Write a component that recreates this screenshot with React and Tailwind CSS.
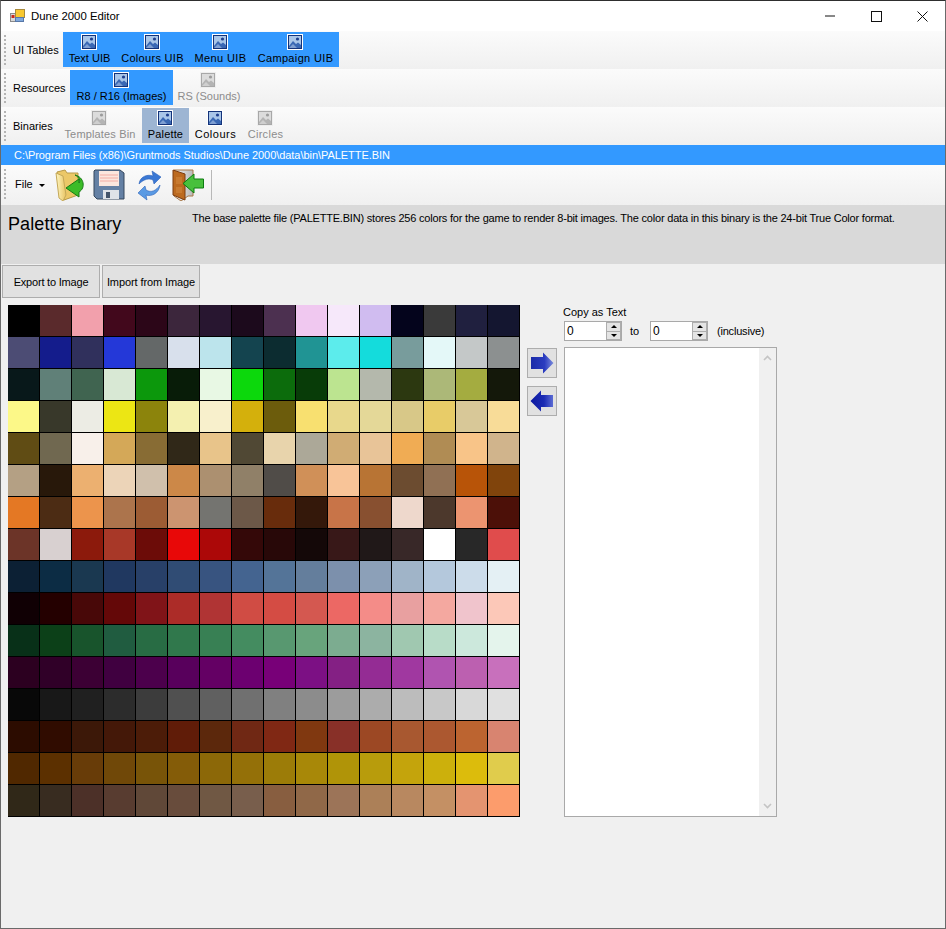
import React from "react";

const palette = [
  ["#000000","#5a2a2c","#f2a0ac","#42081c","#2c0618","#3c263c","#281630","#1c0a1c","#4c3050","#f0c8f0","#f6e8fa","#d0bcf0","#04041c","#3a3a3a","#20203f","#141630"],
  ["#4c4c74","#141c8c","#30305c","#2438d8","#646868","#d8e0ec","#bce4ec","#14444f","#0c2c30","#209494","#5cecec","#14dcdc","#789c9c","#e4f8f8","#c4c8c8","#8c9090"],
  ["#08181a","#608078","#406450","#d8e8d4","#0c980c","#081c08","#e8f8e4","#0cd80c","#0c6c0c","#083c08","#bce490","#b4b8ac","#2c3810","#acb878","#a4ac40","#14180a"],
  ["#fcf888","#38382a","#ecece4","#ece614","#8c840c","#f4f0b0","#f8f0cc","#d4b00c","#6c5c0c","#f8e070","#e8d88c","#e4d898","#d8c888","#e8cc68","#d8c898","#f8dc98"],
  ["#604c14","#706850","#f8f0ea","#d4a858","#886c34","#302818","#e8c48a","#504834","#e8d4ac","#aca898","#d0ac74","#e8c498","#f0ac54","#b08c54","#f8c488","#d0b48c"],
  ["#b4a084","#28180a","#ecb070","#ecd4b8","#d0c0ac","#cc8848","#ac9070","#908068","#504c48","#d09058","#f8c498","#b87434","#6c4c30","#907054","#b85408","#80440c"],
  ["#e47824","#4c2c14","#ec944c","#ac744c","#9c5c34","#cc9470","#747470","#6c5848","#682c0c","#34180a","#c87448","#885030","#eed8cc","#4c382c","#ec9470","#4c1008"],
  ["#6c3428","#d8d0d0","#8c1a0c","#a83828","#6c0c08","#e80808","#ac0808","#340808","#280808","#140808","#381818","#201818","#382828","#ffffff","#282828","#e04c4c"],
  ["#0c2034","#0c2c44","#1a3850","#203860","#284068","#304c74","#385480","#446490","#547498","#647e9c","#7c90ac","#8ca0b8","#a0b4c8","#b4c8dc","#ccdcea","#e4f0f4"],
  ["#100004","#240000","#480808","#640808","#801418","#ac2c28","#b03434","#d04c44","#d44c44","#d45850","#ec6864","#f48c88","#e8a0a0","#f4a8a0","#f0c4cc","#fcc8b8"],
  ["#083018","#0c4018","#18542c","#205c40","#286c44","#30784c","#388054","#448c60","#589870","#68a47c","#7cac90","#8cb4a0","#a0c8b0","#b8dcc8","#cce8dc","#e4f4ec"],
  ["#2c0020","#300028","#3c0034","#400040","#4c004c","#58005c","#640064","#6c0070","#780078","#7c1084","#842084","#942c94","#a038a0","#b054b0","#bc60b0","#c870bc"],
  ["#080808","#181818","#202020","#2c2c2c","#3c3c3c","#505050","#606060","#707070","#808080","#8c8c8c","#9c9c9c","#acacac","#bcbcbc","#c8c8c8","#d8d8d8","#e0e0e0"],
  ["#2c0c00","#300c00","#3c1808","#441808","#4c1c08","#601c08","#5c280c","#702814","#802814","#803810","#883028","#9c4824","#a85830","#ac5830","#bc6430","#d88470"],
  ["#502800","#5c3000","#683c08","#704808","#785408","#845c08","#8c6808","#947008","#9c7c08","#a88808","#b09408","#b89c0c","#c4a40c","#ccb00c","#dcbc0c","#e0cc4c"],
  ["#302818","#382c20","#4c3028","#583c30","#604838","#684c3c","#705844","#785e4c","#885e40","#906848","#9c7458","#ac8058","#b88860","#c49064","#e49470","#fc9c6c"],
];

function AppIcon() {
  return (
    <svg width="16" height="16" viewBox="0 0 16 16" className="shrink-0">
      <rect x="0.5" y="5.5" width="5" height="8" fill="#d8d8d8" stroke="#8a8a8a" />
      <rect x="1.5" y="7" width="3" height="3" fill="#c8281c" />
      <rect x="5.5" y="1.5" width="9" height="8" fill="#f8c830" stroke="#a88a3c" />
      <rect x="5.5" y="9.5" width="8" height="4" fill="#7fa8dc" stroke="#5878a8" />
    </svg>
  );
}

function ImageIcon({ off }) {
  const frame = off ? "#a8a8a8" : "#14337a";
  const sky = off ? "#dcdcdc" : "#a9c6e8";
  const hill = off ? "#b4b4b4" : "#3a68b4";
  const hill2 = off ? "#cfcfcf" : "#7f9fd2";
  return (
    <svg width="16" height="16" viewBox="0 0 16 16" className="block -translate-x-[1px]">
      <rect x="0" y="0" width="16" height="16" fill={off ? "#eeeeee" : "#ffffff"} />
      <rect x="1" y="1" width="14" height="14" fill={frame} />
      <rect x="2" y="2" width="12" height="12" fill={sky} />
      <circle cx="10.5" cy="5" r="1.6" fill={off ? "#9c9c9c" : "#1e3f8e"} />
      <path d="M2 12 L6 7 L9 10 L11 8.5 L14 11 V14 H2 Z" fill={hill} />
      <path d="M2 14 L6 10 L10 14 Z" fill={hill2} />
    </svg>
  );
}

function FolderIcon() {
  return (
    <svg width="32" height="32" viewBox="0 0 32 32" className="block">
      <defs>
        <linearGradient id="folderFront" x1="0" y1="0" x2="1" y2="0">
          <stop offset="0" stopColor="#fff6c0" />
          <stop offset="1" stopColor="#e8c464" />
        </linearGradient>
      </defs>
      <path d="M3 3 L11 1 L13 4 L24 4 L24 26 L10 31 Z" fill="#ecc868" stroke="#b89a48" />
      <path d="M2 4 L9 7 L12 26 L9 32 L5 29 Z" fill="url(#folderFront)" stroke="#c4a858" />
      <path d="M21 6 C30 8 32 19 25 23 L25 28 L12 19 L25 10 L25 14 C27 12 25 8 21 6 Z" fill="#3cbc28" stroke="#167a14" />
    </svg>
  );
}

function SaveIcon() {
  return (
    <svg width="32" height="32" viewBox="0 0 32 32" className="block">
      <path d="M2 1 H27 L31 4 V30 H4 L1 27 V2 Z" fill="#6480a4" stroke="#34465c" />
      <rect x="6" y="2" width="20" height="15" fill="#fbe6de" />
      <path d="M7 6 H25 M7 9 H25 M7 12 H25" stroke="#f2aca4" />
      <rect x="10" y="21" width="16" height="9" fill="#dfe3e8" />
      <rect x="13" y="23" width="4" height="6" fill="#44546a" />
    </svg>
  );
}

function RefreshIcon() {
  return (
    <svg width="32" height="32" viewBox="0 0 32 32" className="block">
      <path d="M7 15 C8 7 16 5 21 7 L20 2 L29 8 L22 15 L21 11 C17 9 12 10 7 15 Z" fill="#3a78d4" stroke="#2c62b8" strokeWidth="0.6" />
      <path d="M28 16 C27 24 20 28 14 26 L15 31 L6 24 L13 17 L14 21 C19 24 24 22 28 16 Z" fill="#5a9ae4" stroke="#2c62b8" strokeWidth="0.6" />
    </svg>
  );
}

function DoorIcon() {
  return (
    <svg width="32" height="32" viewBox="0 0 32 32" className="block translate-x-[1px]">
      <defs>
        <linearGradient id="doorGlow" x1="0" y1="0" x2="1" y2="0">
          <stop offset="0" stopColor="#f4f4f4" />
          <stop offset="1" stopColor="#b8b8b8" />
        </linearGradient>
      </defs>
      <path d="M2 1 H21 V27 H16 L9 32 L2 27 Z" fill="url(#doorGlow)" stroke="#a87848" />
      <path d="M1 1 L13 5 V31 L1 26 Z" fill="#bc6a20" stroke="#7c3c10" />
      <rect x="4" y="8" width="6" height="7" fill="#c87a30" />
      <rect x="4" y="18" width="6" height="6" fill="#c87a30" />
      <path d="M31.5 10 H22 V5 L11 14.5 L22 24 V19 H31.5 Z" fill="#48c03c" stroke="#0c7c10" />
    </svg>
  );
}

function BigArrow({ left }) {
  return (
    <svg width="24" height="24" viewBox="0 0 24 24" className="block">
      <defs>
        <linearGradient id="arrowRight" x1="0" y1="0" x2="1" y2="0">
          <stop offset="0" stopColor="#1a2aa8" />
          <stop offset="0.6" stopColor="#2a3cc0" />
          <stop offset="1" stopColor="#7c8cdc" />
        </linearGradient>
        <linearGradient id="arrowLeft" x1="0" y1="0" x2="1" y2="0">
          <stop offset="0" stopColor="#0c18a0" />
          <stop offset="0.6" stopColor="#1c2cb4" />
          <stop offset="1" stopColor="#5c6cd4" />
        </linearGradient>
      </defs>
      {left ? (
        <path d="M0.5 12 L11 1.5 V6 H23 V18 H11 V22.5 Z" fill="url(#arrowLeft)" />
      ) : (
        <path d="M1 6 H13 V1.5 L23.5 12 L13 22.5 V18 H1 Z" fill="url(#arrowRight)" />
      )}
    </svg>
  );
}

function Grip() {
  return (
    <div className="w-[2px] mr-[7px] ml-[3px] self-stretch my-[4px] flex flex-col gap-[2px] overflow-hidden shrink-0">
      {Array.from({ length: 8 }).map((_, i) => (
        <div key={i} className="w-[2px] h-[2px] bg-[#b4b4b4] shrink-0" />
      ))}
    </div>
  );
}

function ToolItem({ label, w, mode, track = "" }) {
  const off = mode === "off";
  const bg = mode === "on" ? "bg-[#3399ff]" : mode === "active" ? "bg-[#9db5d3]" : "";
  return (
    <div className={`${bg} ${w} h-[35px] flex flex-col items-center pt-[2px] shrink-0`}>
      <ImageIcon off={off} />
      <span className={`mt-[1px] text-[11px] leading-[15px] whitespace-nowrap ${track} ${off ? "text-[#8c8c8c]" : "text-black"}`}>
        {label}
      </span>
    </div>
  );
}

function ToolRow({ title, titleW, children }) {
  return (
    <div className="h-[38px] flex bg-gradient-to-b from-[#fbfbfb] to-[#f0f0f0]">
      <Grip />
      <span className={`${titleW} self-center text-[11px] whitespace-nowrap shrink-0`}>{title}</span>
      <div className="flex mt-[1px] self-start">{children}</div>
    </div>
  );
}

function Spinner() {
  return (
    <div className="w-[58px] h-[20px] border border-[#a9a9a9] bg-white flex items-center justify-between shrink-0">
      <span className="pl-[2px] text-[12px] leading-none">0</span>
      <div className="w-[15px] h-[18px] flex flex-col">
        <div className="flex-1 bg-[#e4e4e4] border border-[#adadad] flex items-center justify-center">
          <div className="w-0 h-0 border-x-[3px] border-x-transparent border-b-[3px] border-b-black" />
        </div>
        <div className="flex-1 bg-[#e4e4e4] border border-t-0 border-[#adadad] flex items-center justify-center">
          <div className="w-0 h-0 border-x-[3px] border-x-transparent border-t-[3px] border-t-black" />
        </div>
      </div>
    </div>
  );
}

export default function App() {
  return (
    <div className="w-[946px] h-[929px] flex flex-col bg-[#f0f0f0] border border-[#6a6a6a] border-t-[#2e2e2e] font-['Liberation_Sans',Arial,sans-serif] text-black overflow-hidden">
      {/* Title bar */}
      <div className="h-[30px] bg-white flex items-center shrink-0">
        <div className="ml-[9px]"><AppIcon /></div>
        <span className="ml-[5px] mt-[1px] text-[11.4px]">Dune 2000 Editor</span>
        <div className="ml-auto flex items-center">
          <svg width="46" height="30" viewBox="0 0 46 30"><path d="M18 15 H28" stroke="#111" /></svg>
          <svg width="46" height="30" viewBox="0 0 46 30"><rect x="18.5" y="10.5" width="10" height="10" fill="none" stroke="#111" /></svg>
          <svg width="46" height="30" viewBox="0 0 46 30"><path d="M18.5 10.5 L28.5 20.5 M28.5 10.5 L18.5 20.5" stroke="#111" /></svg>
        </div>
      </div>

      <ToolRow title="UI Tables" titleW="w-[50px]">
        <ToolItem label="Text UIB" w="w-[53px]" mode="on" />
        <ToolItem label="Colours UIB" w="w-[73px]" mode="on" track="tracking-[0.3px]" />
        <ToolItem label="Menu UIB" w="w-[63px]" mode="on" track="tracking-[0.4px]" />
        <ToolItem label="Campaign UIB" w="w-[87px]" mode="on" track="tracking-[0.35px]" />
      </ToolRow>
      <ToolRow title="Resources" titleW="w-[57px]">
        <ToolItem label="R8 / R16 (Images)" w="w-[103px]" mode="on" />
        <ToolItem label="RS (Sounds)" w="w-[72px]" mode="off" />
      </ToolRow>
      <ToolRow title="Binaries" titleW="w-[45px]">
        <ToolItem label="Templates Bin" w="w-[84px]" mode="off" track="tracking-[0.15px]" />
        <ToolItem label="Palette" w="w-[47px]" mode="active" track="tracking-[0.15px]" />
        <ToolItem label="Colours" w="w-[53px]" mode="normal" track="tracking-[0.5px]" />
        <ToolItem label="Circles" w="w-[47px]" mode="off" track="tracking-[0.3px]" />
      </ToolRow>

      {/* Path */}
      <div className="h-[20px] bg-[#3399ff] text-white text-[11px] tracking-[-0.05px] leading-[20px] pl-[13px] shrink-0">
        {"C:\\Program Files (x86)\\Gruntmods Studios\\Dune 2000\\data\\bin\\PALETTE.BIN"}
      </div>

      {/* File toolbar */}
      <div className="h-[40px] flex items-center bg-gradient-to-b from-[#fbfbfb] to-[#f0f0f0] shrink-0">
        <Grip />
        <span className="ml-[2px] -mt-[2px] text-[11px]">File</span>
        <div className="ml-[6px] w-0 h-0 border-x-[3px] border-x-transparent border-t-[3px] border-t-black" />
        <div className="ml-[9px] flex gap-[7px]">
          <FolderIcon />
          <SaveIcon />
          <RefreshIcon />
          <DoorIcon />
        </div>
        <div className="ml-[8px] w-[1px] h-[30px] bg-[#b8b8b8]" />
      </div>

      {/* Header */}
      <div className="h-[59px] bg-[#d9d9d9] flex items-start shrink-0">
        <h1 className="w-[184px] shrink-0 pl-[7px] pt-[8px] text-[18px] tracking-[0.1px] leading-[22px] font-normal">Palette Binary</h1>
        <p className="ml-[7px] pt-[5px] text-[11px] tracking-[-0.2px] leading-[16px] whitespace-nowrap">
          The base palette file (PALETTE.BIN) stores 256 colors for the game to render 8-bit images. The color data in this binary is the 24-bit True Color format.
        </p>
      </div>

      {/* Actions */}
      <div className="flex gap-[2px] pl-[1px] pt-[1px] shrink-0">
        <button className="w-[98px] h-[33px] pt-[1px] border border-[#adadad] bg-[#e1e1e1] text-[11px] tracking-[-0.2px] whitespace-nowrap">Export to Image</button>
        <button className="w-[98px] h-[33px] pt-[1px] border border-[#adadad] bg-[#e1e1e1] text-[11px] tracking-[-0.1px] whitespace-nowrap">Import from Image</button>
      </div>

      {/* Palette and copy panel */}
      <div className="flex pl-[7px] pt-[7px]">
        <div className="grid grid-cols-[repeat(16,32px)] shrink-0">
          {palette.flat().map((c, i) => (
            <div key={i} className="h-[32px] border-r border-b border-black" style={{ backgroundColor: c }} />
          ))}
        </div>

        <div className="flex flex-col gap-[8px] ml-[7px] mt-[43px] shrink-0">
          <button className="w-[30px] h-[30px] border border-[#adadad] bg-[#e1e1e1] flex items-center justify-center">
            <BigArrow />
          </button>
          <button className="w-[30px] h-[30px] border border-[#adadad] bg-[#e1e1e1] flex items-center justify-center">
            <BigArrow left />
          </button>
        </div>

        <div className="ml-[7px] flex flex-col w-[213px]">
          <span className="text-[11px] leading-[14px] -ml-[1px]">Copy as Text</span>
          <div className="flex items-center mt-[2px]">
            <Spinner />
            <span className="ml-[8px] w-[20px] text-[11px]">to</span>
            <Spinner />
            <span className="ml-[9px] text-[11px] tracking-[-0.2px] whitespace-nowrap">(inclusive)</span>
          </div>
          <div className="mt-[6px] h-[470px] border border-[#a9a9a9] bg-white flex justify-end">
            <div className="w-[17px] bg-[#f0f0f0] flex flex-col items-center justify-between py-[7px]">
              <svg width="9" height="6" viewBox="0 0 9 6"><path d="M1 5 L4.5 1.5 L8 5" fill="none" stroke="#c4c4c4" strokeWidth="1.6" /></svg>
              <svg width="9" height="6" viewBox="0 0 9 6"><path d="M1 1 L4.5 4.5 L8 1" fill="none" stroke="#c4c4c4" strokeWidth="1.6" /></svg>
            </div>
          </div>
        </div>
      </div>
    </div>
  );
}
